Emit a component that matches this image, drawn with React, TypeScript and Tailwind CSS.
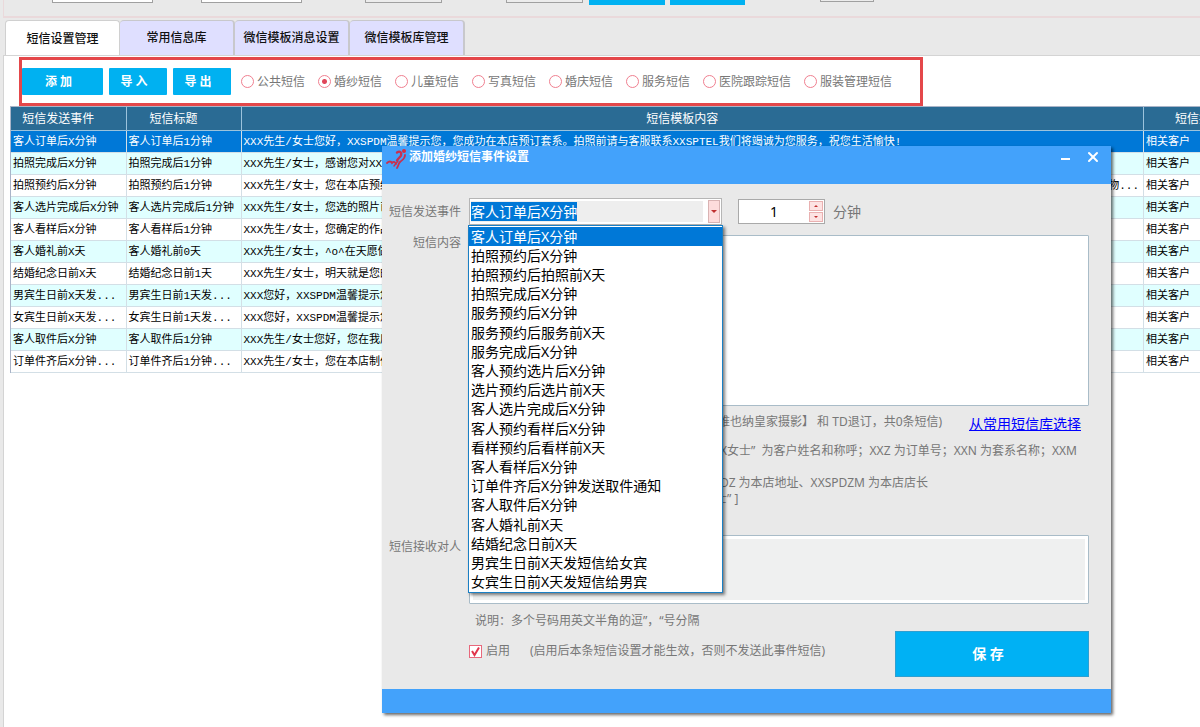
import React from 'react';
import { X } from 'lucide-react';

const tabs = ['短信设置管理', '常用信息库', '微信模板消息设置', '微信模板库管理'];

const categories = [
  '公共短信',
  '婚纱短信',
  '儿童短信',
  '写真短信',
  '婚庆短信',
  '服务短信',
  '医院跟踪短信',
  '服装管理短信',
];

type Row = { event: string; title: string; content: string; tail?: string };

const rows: Row[] = [
  {
    event: '客人订单后X分钟',
    title: '客人订单后1分钟',
    content:
      'XXX先生/女士您好，XXSPDM温馨提示您，您成功在本店预订套系。拍照前请与客服联系XXSPTEL我们将竭诚为您服务，祝您生活愉快!',
  },
  { event: '拍照完成后X分钟', title: '拍照完成后1分钟', content: 'XXX先生/女士，感谢您对XXX' },
  { event: '拍照预约后X分钟', title: '拍照预约后1分钟', content: 'XXX先生/女士，您在本店预约', tail: '物...' },
  { event: '客人选片完成后X分钟', title: '客人选片完成后1分钟', content: 'XXX先生/女士，您选的照片已' },
  { event: '客人看样后X分钟', title: '客人看样后1分钟', content: 'XXX先生/女士，您确定的作品' },
  { event: '客人婚礼前X天', title: '客人婚礼前0天', content: 'XXX先生/女士，^o^在天愿做比' },
  { event: '结婚纪念日前X天', title: '结婚纪念日前1天', content: 'XXX先生/女士，明天就是您的' },
  { event: '男宾生日前X天发...', title: '男宾生日前1天发...', content: 'XXX您好，XXSPDM温馨提示您' },
  { event: '女宾生日前X天发...', title: '女宾生日前1天发...', content: 'XXX您好，XXSPDM温馨提示您' },
  { event: '客人取件后X分钟', title: '客人取件后1分钟', content: 'XXX先生/女士您好，您在我店' },
  { event: '订单件齐后X分钟...', title: '订单件齐后1分钟...', content: 'XXX先生/女士，您在本店制作' },
];

const eventOptions = [
  '客人订单后X分钟',
  '拍照预约后X分钟',
  '拍照预约后拍照前X天',
  '拍照完成后X分钟',
  '服务预约后X分钟',
  '服务预约后服务前X天',
  '服务完成后X分钟',
  '客人预约选片后X分钟',
  '选片预约后选片前X天',
  '客人选片完成后X分钟',
  '客人预约看样后X分钟',
  '看样预约后看样前X天',
  '客人看样后X分钟',
  '订单件齐后X分钟发送取件通知',
  '客人取件后X分钟',
  '客人婚礼前X天',
  '结婚纪念日前X天',
  '男宾生日前X天发短信给女宾',
  '女宾生日前X天发短信给男宾',
];

function FilterStrip() {
  return (
    <div className="ml-[3px] flex h-[18px] items-start overflow-hidden border-b-2 border-l border-[#ead9db] pl-12">
      <input aria-label="条件一" className="-mt-[21px] h-6 w-[101px] border border-[#a0a0a0] bg-white" />
      <input aria-label="条件二" className="-mt-[21px] ml-12 h-6 w-[101px] border border-[#a0a0a0] bg-white" />
      <input aria-label="条件三" className="-mt-[21px] ml-[63px] h-6 w-[77px] border border-[#a0a0a0] bg-[#ececec]" />
      <input aria-label="条件四" className="-mt-[21px] ml-16 h-6 w-[77px] border border-[#a0a0a0] bg-[#ececec]" />
      <button aria-label="查询" className="-mt-5 ml-[6px] h-[25px] w-[76px] bg-[#00b1f1]" />
      <button aria-label="清空" className="-mt-5 ml-[5px] h-[25px] w-[75px] bg-[#00b1f1]" />
      <input aria-label="条件五" className="-mt-[22px] ml-[75px] h-6 w-[54px] border border-[#a0a0a0] bg-[#ececec]" />
    </div>
  );
}

function Tabs() {
  return (
    <div role="tablist" className="flex h-[37px] items-end pl-[5px]">
      {tabs.map((tab, i) => (
        <button
          key={tab}
          role="tab"
          aria-selected={i === 0}
          className={
            i === 0
              ? 'h-[35px] w-[115px] rounded-t-[4px] border-x border-t border-[#d0d0d0] bg-white pt-[2px] text-xs font-medium text-[#111]'
              : 'h-[35px] w-[115px] rounded-t-[4px] border-r-2 border-t border-[#c8c8cc] bg-[#dfdfff] text-xs font-medium text-[#111]'
          }
        >
          {tab}
        </button>
      ))}
    </div>
  );
}

function Toolbar() {
  const action = 'h-[27px] rounded-[1px] bg-[#00b1f1] pr-2 text-xs font-bold text-white';
  return (
    <div className="ml-[15px] flex h-[49px] w-fit items-center border-[3px] border-[#e4474a] pr-7">
      <div className="flex gap-[6px]">
        <button className={`${action} w-[81px]`}>添 加</button>
        <button className={`${action} w-[58px]`}>导 入</button>
        <button className={`${action} w-[58px]`}>导 出</button>
      </div>
      <div className="ml-[10px] flex gap-[13px]">
        {categories.map((name, i) => (
          <label key={name} className="flex items-center gap-[3px] whitespace-nowrap text-xs text-[#777]">
            <input
              type="radio"
              name="category"
              defaultChecked={i === 1}
              className="size-[13px] appearance-none rounded-full border border-[#f07f90] bg-white checked:bg-[radial-gradient(circle,#e0465a_2px,#fff_3px)]"
            />
            {name}
          </label>
        ))}
      </div>
    </div>
  );
}

function MessageTable() {
  return (
    <div className="ml-[6px] overflow-hidden border-l border-t border-[#a9b4c8]">
      <table className="w-[calc(100%+99px)] table-fixed border-collapse">
        <colgroup>
          <col className="w-[115px]" />
          <col className="w-[115px]" />
          <col />
          <col className="w-[155px]" />
        </colgroup>
        <thead>
          <tr className="h-[23px] bg-[#2a6b94] text-xs text-white">
            {['短信发送事件', '短信标题', '短信模板内容', '短信接收对人'].map((head) => (
              <th key={head} className="border-b border-r border-[#9cc3dc] pb-0 pl-0 pr-5 pt-[2px] font-normal">
                {head}
              </th>
            ))}
          </tr>
        </thead>
        <tbody className='font-["Liberation_Mono","Noto_Sans_CJK_SC",monospace] text-[11px] leading-[19px]'>
          {rows.map((row, i) => {
            const tone =
              i === 0 ? 'bg-[#0078d7] text-white' : i % 2 ? 'bg-[#e0ffff] text-black' : 'bg-white text-black';
            const cell =
              'overflow-hidden whitespace-nowrap border-b border-r border-[#d3dfe6] pb-0 pl-[2px] pr-0 pt-[2px]';
            return (
              <tr key={row.event} className={`h-[22px] ${tone}`}>
                <td className={cell}>{row.event}</td>
                <td className={cell}>{row.title}</td>
                <td className={cell}>
                  <div className="flex justify-between pr-1">
                    <span>{row.content}</span>
                    {row.tail && <span>{row.tail}</span>}
                  </div>
                </td>
                <td className={cell}>相关客户</td>
              </tr>
            );
          })}
        </tbody>
      </table>
    </div>
  );
}

function Logo() {
  return (
    <svg viewBox="0 0 24 24" className="size-6" aria-hidden="true" fill="none" stroke="#c9304f" strokeLinecap="round">
      <circle cx="19" cy="5" r="2" fill="#d92a3f" stroke="none" />
      <path d="M12 6.500c3-2 5 0 4 3-1 2-3 3-4 5" strokeWidth="2.400" />
      <path d="M20 9c0 4-3 5-5 7s-1 3-3 6" strokeWidth="1.800" />
      <path d="M2 17c2-2 4-2 5 0 2-2 3-1 4 1" strokeWidth="1.800" />
      <path d="M9 20l4-5" strokeWidth="1.400" />
    </svg>
  );
}

function EventSelect() {
  return (
    <div className="relative w-[253px]">
      <select
        id="event"
        defaultValue={eventOptions[0]}
        className="block h-[27px] w-full appearance-none border border-[#b5b5b5] bg-white bg-[image:linear-gradient(#0078d7,#0078d7),linear-gradient(#eeeeee,#eeeeee)] bg-[length:106px_19px,232px_21px] bg-[position:1px_3px,1px_2px] bg-no-repeat pl-px text-sm leading-5 text-white"
      >
        {eventOptions.map((option) => (
          <option key={option}>{option}</option>
        ))}
      </select>
      <span className="pointer-events-none absolute right-[2px] top-[2px] flex h-[23px] w-3 items-center justify-center border border-[#d9b3b3] bg-[#fddcdc]">
        <svg viewBox="0 0 6 4" className="h-1 w-[6px]" fill="#c03030">
          <path d="M0 0h6L3 3z" />
        </svg>
      </span>
      <ul
        role="listbox"
        className="absolute -left-px top-[27px] z-10 flex h-[368px] w-[255px] flex-col border border-[#1a7fc4] bg-white pt-px text-sm leading-5 text-black shadow-[2px_2px_3px_rgba(0,0,0,0.5)]"
      >
        {eventOptions.map((option, i) => (
          <li
            key={option}
            role="option"
            aria-selected={i === 0}
            className={
              i === 0
                ? 'flex min-h-0 flex-1 items-center bg-[#0078d7] pl-[2px] text-white'
                : 'flex min-h-0 flex-1 items-center pl-[2px]'
            }
          >
            {option}
          </li>
        ))}
      </ul>
    </div>
  );
}

function Stepper() {
  const step = 'flex h-[10px] w-[14px] items-center justify-center border border-[#e9b0b0] bg-[#fde3e3]';
  return (
    <div className="flex h-[25px] w-[87px] items-center border border-[#a9a9a9] bg-white pr-px">
      <input
        aria-label="分钟数"
        defaultValue="1"
        className="h-full w-0 flex-1 bg-transparent text-center text-sm text-black"
      />
      <div className="flex flex-col gap-px">
        <button className={step} aria-label="增加">
          <svg viewBox="0 0 4 2" className="h-[2px] w-1" fill="#c03030">
            <path d="M2 0l2 2H0z" />
          </svg>
        </button>
        <button className={step} aria-label="减少">
          <svg viewBox="0 0 4 2" className="h-[2px] w-1" fill="#c03030">
            <path d="M0 0h4L2 2z" />
          </svg>
        </button>
      </div>
    </div>
  );
}

function EventDialog() {
  return (
    <section
      role="dialog"
      aria-label="添加婚纱短信事件设置"
      className="absolute left-[382px] top-[146px] w-[729px] bg-[#e9e9e9] text-xs text-[#777] shadow-[2px_2px_3px_rgba(0,0,0,0.6)]"
    >
      <header className="flex h-[38px] items-start bg-[#43a2fb] pl-[3px] pr-2 text-white">
        <Logo />
        <h2 className="pt-[2px] text-xs font-bold leading-[18px]">添加婚纱短信事件设置</h2>
        <div className="ml-auto flex gap-2 pt-px">
          <button aria-label="最小化" className="flex size-5 items-center justify-center pt-1">
            <span className="h-[2px] w-[9px] bg-white" />
          </button>
          <button aria-label="关闭" className="flex size-5 items-center justify-center">
            <X className="size-4" strokeWidth={3} />
          </button>
        </div>
      </header>

      <div className="grid grid-cols-[79px_1fr] gap-x-2 pb-3 pr-[22px] pt-[14px]">
        <label htmlFor="event" className="pt-[6px] text-right leading-4">
          短信发送事件
        </label>
        <div className="flex items-center">
          <EventSelect />
          <div className="ml-4">
            <Stepper />
          </div>
          <span className="ml-2 text-sm leading-5">分钟</span>
        </div>

        <label htmlFor="content" className="pt-[10px] text-right leading-4">
          短信内容
        </label>
        <textarea
          id="content"
          className="mt-[10px] block h-[171px] w-full resize-none rounded-[1px] border border-[#a9bcc8] bg-white"
        />

        <div className="col-start-2 h-[129px] whitespace-nowrap leading-4">
          <div className="flex items-start justify-between pl-[249px] pr-2 pt-2">
            <span>维也纳皇家摄影】 和 TD退订，共0条短信)</span>
            <a href="#library" className="pt-[2px] text-sm leading-4 text-[#0000ff] underline">
              从常用短信库选择
            </a>
          </div>
          <p className="pl-[251px] pt-[11px]">X女士”&nbsp; 为客户姓名和称呼；XXZ 为订单号；XXN 为套系名称；XXM</p>
          <p className="pl-[251px] pt-4">DZ 为本店地址、XXSPDZM 为本店店长</p>
          <p className="pl-[246px]">士” ]</p>
        </div>

        <label htmlFor="receivers" className="pt-1 text-right leading-4">
          短信接收对人
        </label>
        <div className="rounded-[1px] border border-[#a9bcc8] bg-white p-[3px]">
          <textarea id="receivers" className="block h-[61px] w-full resize-none bg-[#eff0f0]" />
        </div>

        <p className="col-start-2 pl-[6px] pt-[9px] leading-4">说明：多个号码用英文半角的逗”，“号分隔</p>

        <div className="col-start-2 flex items-start justify-between">
          <div className="flex items-center gap-5 pt-[14px] leading-4">
            <label className="flex items-center gap-1">
              <span className="relative flex">
                <input
                  type="checkbox"
                  defaultChecked
                  className="peer size-[13px] appearance-none border border-[#e8687c] bg-white"
                />
                <svg
                  viewBox="0 0 13 13"
                  className="pointer-events-none absolute inset-0 hidden size-[13px] peer-checked:block"
                  fill="none"
                  stroke="#e0354c"
                  strokeWidth="2"
                >
                  <path d="M3 6l2.5 4L10 2.5" />
                </svg>
              </span>
              启用
            </label>
            <span>(启用后本条短信设置才能生效，否则不发送此事件短信)</span>
          </div>
          <button className="mt-[2px] h-[46px] w-[194px] border border-[#2f9fd0] bg-[#00b1f4] pr-2 text-sm font-bold text-white">
            保 存
          </button>
        </div>
      </div>

      <footer className="h-6 bg-[#43a2fb]" />
    </section>
  );
}

export default function App() {
  return (
    <div className='relative flex min-h-screen flex-col overflow-hidden bg-[#e9e9e9] font-["Noto_Sans","Noto_Sans_CJK_SC",sans-serif]'>
      <FilterStrip />
      <Tabs />
      <main className="ml-[3px] flex-1 border-l border-t border-[#d4d4d4] bg-white pt-px">
        <Toolbar />
        <MessageTable />
      </main>
      <EventDialog />
    </div>
  );
}
